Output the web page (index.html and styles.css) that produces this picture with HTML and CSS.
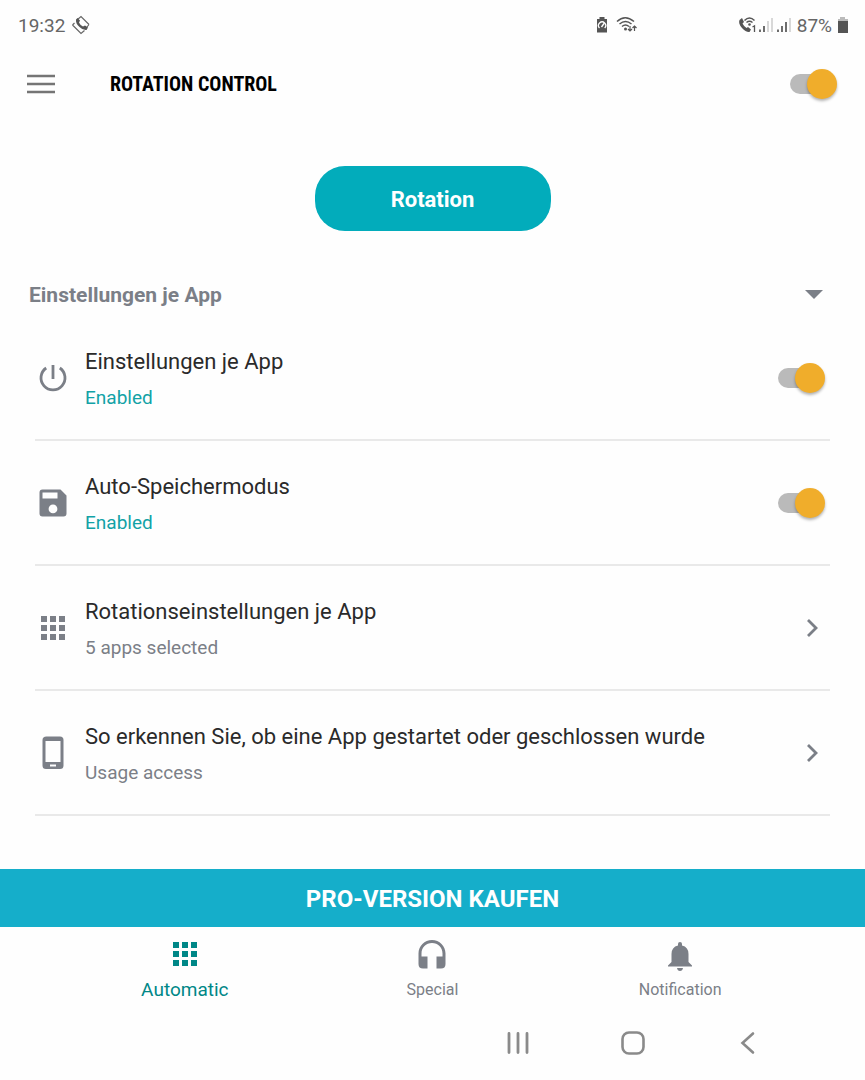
FILE: index.html
```
<!DOCTYPE html>
<html lang="de">
<head>
    <meta charset="UTF-8">
    <meta name="viewport" content="width=device-width, initial-scale=1.0">
    <title>Rotation Control</title>
    <link rel="stylesheet" href="styles.css">
</head>
<body>

<div class="status-bar">
    <span>19:32</span>
    <svg class="status-rotate" width="20" height="20" viewBox="0 0 20 20">
        <path d="M6.500 4.500L10 1.500L18 9.500M13.500 15.500L10 18.500L1.500 10M1.500 10L3.500 8M18 9.500L16 12" fill="none" stroke="#666" stroke-width="1.200"/>
        <path d="M5 4.500L6.500 3L9 5.500L8 7.500Q9 10 12 11.500L14 10.500L17 12.500L15.500 15Q12 15.500 8.500 12Q4.500 8.500 5 4.500Z" fill="#555"/>
    </svg>
    <div class="status-middle">
        <svg width="12" height="16" viewBox="0 0 12 16">
            <path d="M3.500 0H8.500V2H11V15.500H1V2H3.500Z" fill="#555"/>
            <path d="M3.500 11A3.600 3.600 0 1 1 8.700 11M5.500 10L8 6.500" fill="none" stroke="#fff" stroke-width="1.300"/>
        </svg>
        <svg width="22" height="18" viewBox="0 0 22 18">
            <g fill="none" stroke="#555" stroke-width="1.500">
                <path d="M1 5.500Q9 -2 18 5.500M3.500 8Q9.500 3 15.500 8M6 10.500Q9.500 7.500 13 10.500"/>
                <path d="M14 10V15M12 13L14 15L16 13M18.500 15V10M16.500 12L18.500 10L20.500 12" stroke-width="1.200"/>
            </g>
            <circle cx="9.500" cy="13" r="1.500" fill="#555"/>
        </svg>
    </div>
    <div class="status-right">
        <svg width="54" height="17" viewBox="0 0 54 17">
            <path d="M1.500 3L4 1L6 5L4.500 6.500Q6 9.500 8.500 11L10 10L13 12.500L11.500 15Q8 15.500 4 11Q0 6.500 1.500 3Z" fill="#555"/>
            <path d="M6.500 3.500Q11.500 -1.500 16.500 3.500M8.500 5.500Q11.500 3 14.500 5.500" fill="none" stroke="#555" stroke-width="1.500"/>
            <circle cx="11.500" cy="7.500" r="1.300" fill="#555"/>
            <path d="M14.500 10L16.500 8.800V15" fill="none" stroke="#555" stroke-width="1.300"/>
            <path d="M22 12.500V15M26 9V15M40 12.500V15M44 9V15M48 5V15" stroke="#555" stroke-width="1.700"/>
            <path d="M30 4V15M34 1V15M52 1V15" stroke="#ccc" stroke-width="1.500"/>
        </svg>
        <span>87%</span>
        <svg width="12" height="17" viewBox="0 0 12 17">
            <path d="M3 0H8V2H11V4H1V2H3Z" fill="#bbb"/>
            <path d="M1 4H11V16H1Z" fill="#555"/>
        </svg>
    </div>
</div>

<header class="app-bar">
    <button class="menu-button" aria-label="Menü">
        <svg width="28" height="20" viewBox="0 0 28 20">
            <path d="M0 2H28M0 10H28M0 18H28" stroke="#757575" stroke-width="2.600"/>
        </svg>
    </button>
    <h1>ROTATION CONTROL</h1>
    <input type="checkbox" class="switch" aria-label="Rotation Control" checked>
</header>

<main>
    <button class="rotation-button">Rotation</button>

    <div class="section-head">
        <h2>Einstellungen je App</h2>
        <svg width="18" height="10" viewBox="0 0 18 10">
            <path d="M0 0H18L9 9Z" fill="#7b7f87"/>
        </svg>
    </div>

    <div class="settings">
        <label class="row" for="perApp">
            <svg class="row-icon" viewBox="0 0 36 36">
                <path d="M18 5V19M11.200 8A12 12 0 1 0 24.800 8" fill="none" stroke="#7b7f87" stroke-width="2.800"/>
            </svg>
            <span class="row-text">
                <span class="row-title">Einstellungen je App</span>
                <span class="row-sub enabled">Enabled</span>
            </span>
            <input type="checkbox" class="switch" id="perApp" checked>
        </label>
        <label class="row" for="autoSave">
            <svg class="row-icon" viewBox="0 0 36 36">
                <path fill-rule="evenodd" d="M7.500 4.500H25.500L31.500 10.500V28.500Q31.500 31.500 28.500 31.500H7.500Q4.500 31.500 4.500 28.500V7.500Q4.500 4.500 7.500 4.500ZM7.500 7.500V13.500H22.500V7.500ZM18 19.500A4.400 4.400 0 1 0 18 28.300A4.400 4.400 0 1 0 18 19.500Z" fill="#7b7f87"/>
            </svg>
            <span class="row-text">
                <span class="row-title">Auto-Speichermodus</span>
                <span class="row-sub enabled">Enabled</span>
            </span>
            <input type="checkbox" class="switch" id="autoSave" checked>
        </label>
        <a class="row" href="#">
            <svg class="row-icon" viewBox="0 0 36 36">
                <path d="M6 6h6v6H6zM15 6h6v6h-6zM24 6h6v6h-6zM6 15h6v6H6zM15 15h6v6h-6zM24 15h6v6h-6zM6 24h6v6H6zM15 24h6v6h-6zM24 24h6v6h-6z" fill="#7b7f87"/>
            </svg>
            <span class="row-text">
                <span class="row-title">Rotationseinstellungen je App</span>
                <span class="row-sub">5 apps selected</span>
            </span>
            <svg class="chevron" viewBox="0 0 12 20">
                <path d="M2 2L10 10L2 18" fill="none" stroke="#7b7f87" stroke-width="2.800"/>
            </svg>
        </a>
        <a class="row" href="#">
            <svg class="row-icon" viewBox="0 0 36 36">
                <path fill-rule="evenodd" d="M11.500 1.500H25Q28.500 1.500 28.500 5V30.500Q28.500 34 25 34H11Q7.500 34 7.500 30.500V5Q7.500 1.500 11.500 1.500ZM10.500 6V27H25.500V6ZM15 29.500V31.500H21V29.500Z" fill="#7b7f87"/>
            </svg>
            <span class="row-text">
                <span class="row-title">So erkennen Sie, ob eine App gestartet oder geschlossen wurde</span>
                <span class="row-sub">Usage access</span>
            </span>
            <svg class="chevron" viewBox="0 0 12 20">
                <path d="M2 2L10 10L2 18" fill="none" stroke="#7b7f87" stroke-width="2.800"/>
            </svg>
        </a>
    </div>
</main>

<footer>
    <button class="buy-button">PRO-VERSION KAUFEN</button>

    <nav class="tabs">
        <a class="active" href="#">
            <svg width="36" height="36" viewBox="0 0 36 36">
                <path d="M6 6h6v6H6zM15 6h6v6h-6zM24 6h6v6h-6zM6 15h6v6H6zM15 15h6v6h-6zM24 15h6v6h-6zM6 24h6v6H6zM15 24h6v6h-6zM24 24h6v6h-6z" fill="#008787"/>
            </svg>
            <span>Automatic</span>
        </a>
        <a href="#">
            <svg width="36" height="36" viewBox="0 0 36 36">
                <path d="M18 4C10.500 4 4.500 10 4.500 17.500V28Q4.500 32.500 9 32.500H13.500V20.500H7.500V17.500C7.500 11.500 12 7 18 7S28.500 11.500 28.500 17.500V20.500H22.500V32.500H27Q31.500 32.500 31.500 28V17.500C31.500 10 25.500 4 18 4Z" fill="#7b7f87"/>
            </svg>
            <span>Special</span>
        </a>
        <a href="#">
            <svg width="36" height="36" viewBox="0 0 36 36">
                <path d="M18 6Q20 6 20 8V9.500Q26.500 11 26.500 18V26L30 29.500V30.500H6V29.500L9.500 26V18Q9.500 11 16 9.500V8Q16 6 18 6ZM15 32H21Q20.500 35 18 35T15 32Z" fill="#7b7f87"/>
            </svg>
            <span>Notification</span>
        </a>
    </nav>

    <div class="system-nav">
        <button aria-label="Letzte Apps">
            <svg width="24" height="24" viewBox="0 0 24 24">
                <path d="M3 2.500V21.500M12 2.500V21.500M21 2.500V21.500" stroke="#8a8a8a" stroke-width="2.800" stroke-linecap="round"/>
            </svg>
        </button>
        <button aria-label="Startseite">
            <svg width="24" height="24" viewBox="0 0 24 24">
                <rect x="1.500" y="1.500" width="21" height="21" rx="6.500" fill="none" stroke="#8a8a8a" stroke-width="2.600"/>
            </svg>
        </button>
        <button aria-label="Zurück">
            <svg width="24" height="24" viewBox="0 0 24 24">
                <path d="M17 2.500L6.500 12L17 21.500" fill="none" stroke="#8a8a8a" stroke-width="2.600" stroke-linecap="round"/>
            </svg>
        </button>
    </div>
</footer>

</body>
</html>
```
FILE: styles.css
```
* { box-sizing: border-box; }
body {
    font-family: Roboto, sans-serif;
    margin: 0;
    min-height: 100vh;
    display: flex;
    flex-direction: column;
    background: #fefefe;
    color: #2a2a2a;
}
h1, h2 { margin: 0; }
svg { display: block; flex: none; }
a { color: inherit; text-decoration: none; }
button { font-family: inherit; border: none; background: none; padding: 0; }

.status-bar {
    display: flex;
    align-items: center;
    height: 50px;
    padding: 0 16px 0 18px;
    font-size: 19px;
    color: #666;
}
.status-rotate { margin-left: 6px; }
.status-middle { display: flex; align-items: center; gap: 8px; margin-left: auto; }
.status-right { display: flex; align-items: center; gap: 5px; margin-left: 100px; }

.app-bar {
    display: flex;
    align-items: center;
    height: 68px;
    padding: 0 28px 0 27px;
}
.app-bar h1 {
    flex: 1;
    margin-left: 55px;
    font-family: "Roboto Condensed", "Liberation Sans Narrow", sans-serif;
    font-size: 20px;
    font-weight: bold;
    color: #000;
}

/* track is the input, knob is ::before */
.switch {
    appearance: none;
    flex: none;
    display: flex;
    align-items: center;
    justify-content: flex-end;
    width: 47px;
    height: 20px;
    margin: 0;
    border-radius: 10px;
    background: linear-gradient(to right, #bababa 36px, transparent 36px);
}
.switch::before {
    content: "";
    flex: none;
    width: 30px;
    height: 30px;
    border-radius: 50%;
    background: #f0ad2b;
    box-shadow: 0 2px 3px rgba(0, 0, 0, 0.3);
}

.rotation-button {
    display: block;
    width: 236px;
    height: 65px;
    margin: 48px auto 43px;
    padding-top: 2px;
    border-radius: 30px;
    background: #02acbb;
    color: #fff;
    font-size: 22px;
    font-weight: bold;
}

.section-head {
    display: flex;
    align-items: center;
    justify-content: space-between;
    height: 42px;
    padding: 0 42px 0 29px;
    color: #7b7f87;
}
.section-head h2 { font-size: 21px; }

.settings { padding: 0 35px; }
.row {
    display: flex;
    align-items: center;
    height: 125px;
    padding-right: 5px;
    border-bottom: 2px solid #e9e9e9;
}
.row-icon { width: 36px; height: 36px; }
.row-text { flex: 1; margin-left: 14px; padding-top: 4px; }
.row-title, .row-sub { display: block; line-height: 36px; }
.row-title { font-size: 22px; }
.row-sub { font-size: 19px; color: #7b7f87; }
.row-sub.enabled { color: #12a2a6; }
.chevron { width: 12px; height: 20px; margin-right: 7px; }

footer { margin-top: auto; }
.buy-button {
    display: block;
    width: 100%;
    height: 58px;
    padding-top: 2px;
    background: #15aeca;
    color: #fff;
    font-size: 24px;
    font-weight: bold;
}
.tabs {
    display: grid;
    grid-template-columns: repeat(3, 1fr);
    height: 79px;
    padding: 9px 61px 0;
}
.tabs a {
    display: flex;
    flex-direction: column;
    align-items: center;
    font-size: 16px;
    line-height: 36px;
    color: #7b7f87;
}
.tabs a.active { font-size: 19px; color: #008787; }

.system-nav {
    display: flex;
    justify-content: flex-end;
    height: 74px;
    padding-right: 60px;
}
.system-nav button {
    display: flex;
    align-items: center;
    justify-content: center;
    width: 115px;
}
```
